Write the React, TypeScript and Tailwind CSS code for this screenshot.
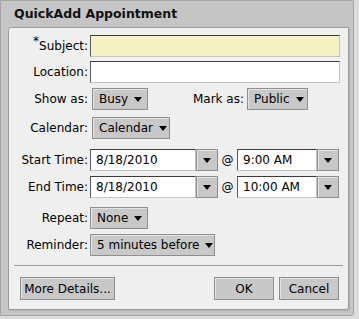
import React from 'react';

const font = { fontFamily: '"DejaVu Sans", Verdana, sans-serif' };

const Arrow = () => (
  <svg width="8" height="5" viewBox="0 0 8 5" className="shrink-0">
    <path d="M0 0H8L4 5Z" fill="#000" />
  </svg>
);

const Label = ({ children, className = '' }: { children: React.ReactNode; className?: string }) => (
  <div className={`w-[81px] shrink-0 text-right pr-[2px] text-[12px] leading-none text-black whitespace-nowrap ${className}`}>{children}</div>
);

const DropButton = ({ label, width }: { label: string; width: string }) => (
  <div className={`${width} h-[22px] flex items-center gap-[6px] pl-[6px] bg-[#c8c8c8] border border-[#8e8e8e] shadow-[inset_1px_1px_0_#e4e4e4] text-[12px] text-black whitespace-nowrap`}>
    <span>{label}</span>
    <Arrow />
  </div>
);

const TextField = ({ value = '', width, yellow = false }: { value?: string; width: string; yellow?: boolean }) => (
  <div
    className={`${width} h-[22px] flex items-center pl-[5px] border-t border-l border-t-[#3c3c3c] border-l-[#5a5a5a] border-r border-b border-r-[#c4c4c4] border-b-[#c4c4c4] text-[12px] text-black whitespace-nowrap ${yellow ? 'bg-[#f4f2c2]' : 'bg-white'}`}
  >
    {value}
  </div>
);

const PickButton = () => (
  <div className="w-[22px] h-[22px] flex items-center justify-center bg-[#c8c8c8] border border-[#8e8e8e] shadow-[inset_1px_1px_0_#e4e4e4]">
    <Arrow />
  </div>
);

const DateRow = ({ label, date, time, className }: { label: string; date: string; time: string; className: string }) => (
  <div className={`flex items-center ${className}`}>
    <Label>{label}</Label>
    <TextField value={date} width="w-[106px]" />
    <PickButton />
    <span className="w-[19px] text-center text-[12px]">@</span>
    <TextField value={time} width="w-[80px]" />
    <PickButton />
  </div>
);

const PlainButton = ({ label, width }: { label: string; width: string }) => (
  <div className={`${width} h-[23px] flex items-center justify-center bg-[#c8c8c8] border border-[#8e8e8e] shadow-[inset_1px_1px_0_#e4e4e4] text-[12px] text-black whitespace-nowrap`}>
    {label}
  </div>
);

export default function App() {
  return (
    <div className="w-[359px] h-[319px] bg-[#dcdcdc]" style={font}>
      <div className="w-[354px] h-[316px] bg-[#c5c5c5] border border-[#a4a4a4] rounded-br-[3px] flex flex-col">
        <div className="h-[26px] pl-[13px] pt-[7px] text-[12.5px] font-bold leading-none text-[#111]">QuickAdd Appointment</div>
        <div className="ml-[7px] w-[341px] h-[283px] bg-[#efefef] border border-[#9c9c9c] rounded-tl-[3px] rounded-br-[3px] shadow-[1px_1px_0_#b0b0b0] flex flex-col">
          <div className="flex items-center mt-[7px]">
            <Label>
              <span className="relative -top-[5px]">*</span>Subject:
            </Label>
            <TextField width="w-[250px]" yellow />
          </div>
          <div className="flex items-center mt-[4px]">
            <Label>Location:</Label>
            <TextField width="w-[250px]" />
          </div>
          <div className="flex items-center mt-[5px]">
            <Label>Show as:</Label>
            <div className="ml-[2px]">
              <DropButton label="Busy" width="w-[56px]" />
            </div>
            <div className="w-[99px] text-right pr-[3px] text-[12px]">Mark as:</div>
            <DropButton label="Public" width="w-[61px]" />
          </div>
          <div className="flex items-center mt-[7px]">
            <Label>Calendar:</Label>
            <div className="ml-[2px]">
              <DropButton label="Calendar" width="w-[78px]" />
            </div>
          </div>
          <DateRow label="Start Time:" date="8/18/2010" time="9:00 AM" className="mt-[10px]" />
          <DateRow label="End Time:" date="8/18/2010" time="10:00 AM" className="mt-[5px]" />
          <div className="flex items-center mt-[9px]">
            <Label>Repeat:</Label>
            <DropButton label="None" width="w-[58px]" />
          </div>
          <div className="flex items-center mt-[5px]">
            <Label>Reminder:</Label>
            <DropButton label="5 minutes before" width="w-[125px]" />
          </div>
          <div className="mx-[5px] mt-[9px] h-px bg-[#9a9a9a]" />
          <div className="flex items-center mt-[11px] pl-[11px] pr-[9px]">
            <PlainButton label="More Details..." width="w-[95px]" />
            <div className="flex-1" />
            <PlainButton label="OK" width="w-[60px]" />
            <div className="w-[5px]" />
            <PlainButton label="Cancel" width="w-[60px]" />
          </div>
        </div>
      </div>
    </div>
  );
}
